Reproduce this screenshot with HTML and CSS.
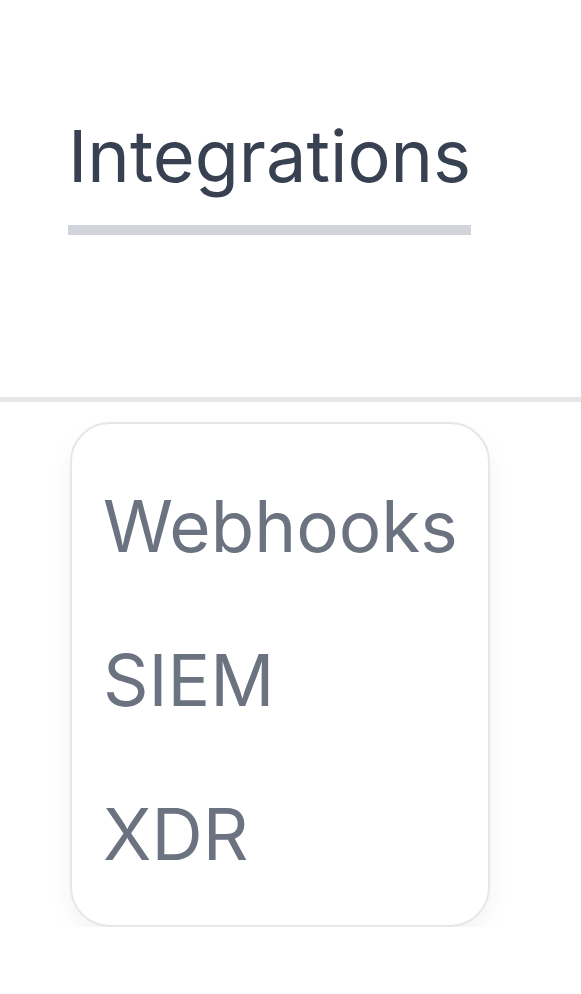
FILE: index.html
```html
<!DOCTYPE html>
<html lang="en">
<head>
    <meta charset="UTF-8">
    <meta name="viewport" content="width=device-width, initial-scale=1.0">
    <title>Integrations</title>
    <link rel="stylesheet" href="styles.css">
</head>
<body>

    <nav class="tabs">
        <a class="tab active" href="#">Integrations</a>
    </nav>

    <div class="menu-wrap">
        <ul class="menu">
            <li class="menu-item">Webhooks</li>
            <li class="menu-item">SIEM</li>
            <li class="menu-item">XDR</li>
        </ul>
    </div>

</body>
</html>
```

FILE: styles.css
```css
body {
    font-family: Inter, "Noto Sans", sans-serif;
    margin: 0;
    background-color: #fff;
}
.tabs {
    padding: 113px 0 0 68px;
    height: 284px;
    border-bottom: 5px solid #e5e7eb;
}
.tab {
    display: inline-block;
    font-size: 72px;
    line-height: 86px;
    color: #374151;
    text-decoration: none;
    padding-bottom: 26px;
    border-bottom: 10px solid #d1d5db;
}
.menu-wrap {
    padding: 20px 0 0 70px;
}
.menu {
    list-style: none;
    margin: 0;
    width: 416px;
    padding: 25px 0 14px;
    border: 2px solid #e5e7eb;
    border-radius: 40px;
    background-color: #fff;
    box-shadow: 0 10px 24px rgba(0, 0, 0, 0.05);
}
.menu-item {
    font-size: 71px;
    line-height: 86px;
    padding: 34px 31px;
    color: #6b7280;
}
```
